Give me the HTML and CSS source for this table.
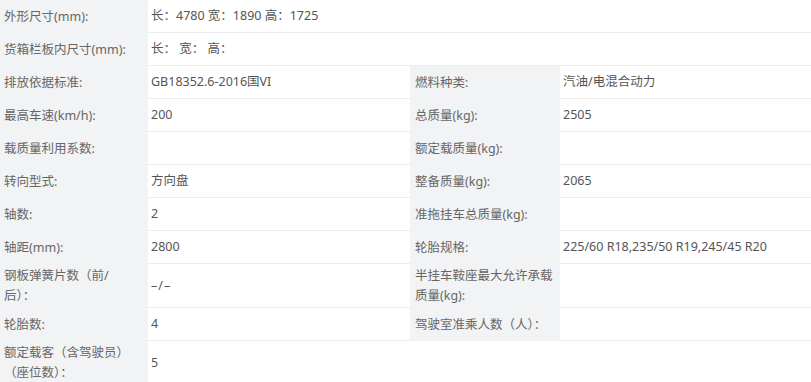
FILE: index.html
```html
<!DOCTYPE html>
<html lang="zh-CN">
<head>
<meta charset="utf-8">
<title>参数</title>
<link rel="stylesheet" href="styles.css">
</head>
<body>
<div class="spec">
  <div class="lab">外形尺寸(mm):</div>
  <div class="val wide">长：4780 宽：1890 高：1725</div>

  <div class="lab">货箱栏板内尺寸(mm):</div>
  <div class="val wide">长：&nbsp;宽：&nbsp;高：</div>

  <div class="lab">排放依据标准:</div>
  <div class="val">GB18352.6-2016国VI</div>
  <div class="lab lab-r">燃料种类:</div>
  <div class="val">汽油/电混合动力</div>

  <div class="lab">最高车速(km/h):</div>
  <div class="val">200</div>
  <div class="lab lab-r">总质量(kg):</div>
  <div class="val">2505</div>

  <div class="lab">载质量利用系数:</div>
  <div class="val"></div>
  <div class="lab lab-r">额定载质量(kg):</div>
  <div class="val"></div>

  <div class="lab">转向型式:</div>
  <div class="val">方向盘</div>
  <div class="lab lab-r">整备质量(kg):</div>
  <div class="val">2065</div>

  <div class="lab">轴数:</div>
  <div class="val">2</div>
  <div class="lab lab-r">准拖挂车总质量(kg):</div>
  <div class="val"></div>

  <div class="lab">轴距(mm):</div>
  <div class="val">2800</div>
  <div class="lab lab-r">轮胎规格:</div>
  <div class="val">225/60 R18,235/50 R19,245/45 R20</div>

  <div class="lab">钢板弹簧片数（前/后）：</div>
  <div class="val dash">–/–</div>
  <div class="lab lab-r">半挂车鞍座最大允许承载质量(kg):</div>
  <div class="val"></div>

  <div class="lab">轮胎数:</div>
  <div class="val">4</div>
  <div class="lab lab-r">驾驶室准乘人数（人）：</div>
  <div class="val"></div>

  <div class="lab">额定载客（含驾驶员）（座位数）：</div>
  <div class="val">5</div>
</div>
</body>
</html>
```

FILE: styles.css
```css
html, body {
  margin: 0;
  padding: 0;
  background: #ffffff;
}

body {
  width: 811px;
  overflow: hidden;
  font-family: "Noto Sans", "Noto Sans CJK SC", sans-serif;
  font-size: 12.5px;
  color: #5a5a5a;
}

.spec {
  display: grid;
  grid-template-columns: 148px 262px 150px 1fr;
}

.lab,
.val {
  box-sizing: border-box;
  min-height: 33px;
  padding: 2px 4px;
  line-height: 20px;
  display: flex;
  align-items: center;
}

.lab {
  background: #f2f3f4;
  color: #666666;
  padding-right: 14px;
}

.lab-r {
  padding-left: 5px;
  padding-right: 4px;
}

.val {
  background: #ffffff;
  border-bottom: 1px solid #ececec;
  padding-left: 3px;
  color: #555555;
}

.dash {
  letter-spacing: 1px;
}

.wide {
  grid-column: span 3;
}
```
